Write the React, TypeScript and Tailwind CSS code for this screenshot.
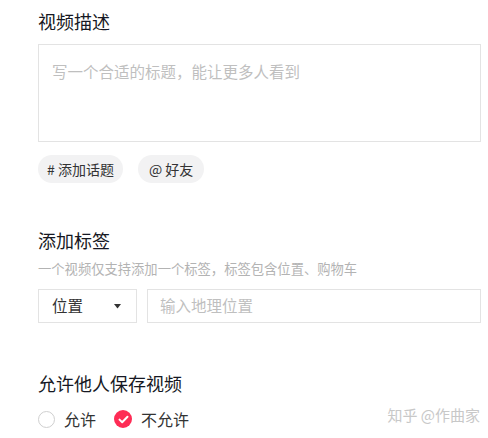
import React from 'react'

const font = { fontFamily: '"Noto Sans CJK SC", "Noto Sans", sans-serif' }

const Radio = ({ checked, label }: { checked?: boolean; label: string }) => (
  <label className="flex items-center gap-[9px]">
    {checked ? (
      <span className="flex h-[18px] w-[18px] items-center justify-center rounded-full bg-[#fe2c55]">
        <svg width="11" height="9" viewBox="0 0 11 9" fill="none">
          <path d="M1.5 4.6 4.2 7.2 9.5 1.8" stroke="#fff" strokeWidth="2" strokeLinecap="round" strokeLinejoin="round" />
        </svg>
      </span>
    ) : (
      <span className="h-[17px] w-[17px] rounded-full border border-[#cfcfcf] bg-white" />
    )}
    <span className="text-[16px] leading-[24px] text-[#333]">{label}</span>
  </label>
)

export default function App() {
  return (
    <div className="h-[438px] w-[488px] overflow-hidden bg-white pl-[38px] pr-[7px] pt-[8px]" style={font}>
      {/* 视频描述 */}
      <h2 className="text-[18px] leading-[26px] font-normal text-[#161823]">视频描述</h2>
      <div className="mt-[10px] h-[98px] border border-[#e3e3e3] px-[13px] pt-[15px]">
        <p className="text-[15.5px] leading-[22px] text-[#bfbfbf]">写一个合适的标题，能让更多人看到</p>
      </div>
      <div className="mt-[13px] flex gap-[15px]">
        <button className="h-[28px] rounded-full bg-[#f2f2f3] px-[9px] text-[14px] text-[#333]"># 添加话题</button>
        <button className="h-[28px] rounded-full bg-[#f2f2f3] px-[11px] text-[14px] text-[#333]">@ 好友</button>
      </div>

      {/* 添加标签 */}
      <h2 className="mt-[44px] text-[18px] leading-[26px] font-normal text-[#161823]">添加标签</h2>
      <p className="mt-[6px] text-[13.3px] leading-[20px] text-[#b3b3b3]">一个视频仅支持添加一个标签，标签包含位置、购物车</p>
      <div className="mt-[10px] flex gap-[10px]">
        <div className="flex h-[34px] w-[99px] items-center justify-between border border-[#e3e3e3] pl-[13px] pr-[15px]">
          <span className="text-[15.5px] text-[#333]">位置</span>
          <svg width="7" height="5" viewBox="0 0 7 5">
            <path d="M0 0h7L3.5 4.5z" fill="#333" />
          </svg>
        </div>
        <div className="flex h-[34px] flex-1 items-center border border-[#e3e3e3] px-[12px]">
          <span className="text-[15.5px] text-[#bfbfbf]">输入地理位置</span>
        </div>
      </div>

      {/* 允许他人保存视频 */}
      <h2 className="mt-[47px] text-[18px] leading-[26px] font-normal text-[#161823]">允许他人保存视频</h2>
      <div className="mt-[11px] flex items-center justify-between">
        <div className="flex items-center gap-[18px]">
          <Radio label="允许" />
          <Radio checked label="不允许" />
        </div>
        <span className="mr-[1px] -translate-y-[4px] text-[15px] text-[#c8c8c8]">知乎 @作曲家</span>
      </div>
    </div>
  )
}
